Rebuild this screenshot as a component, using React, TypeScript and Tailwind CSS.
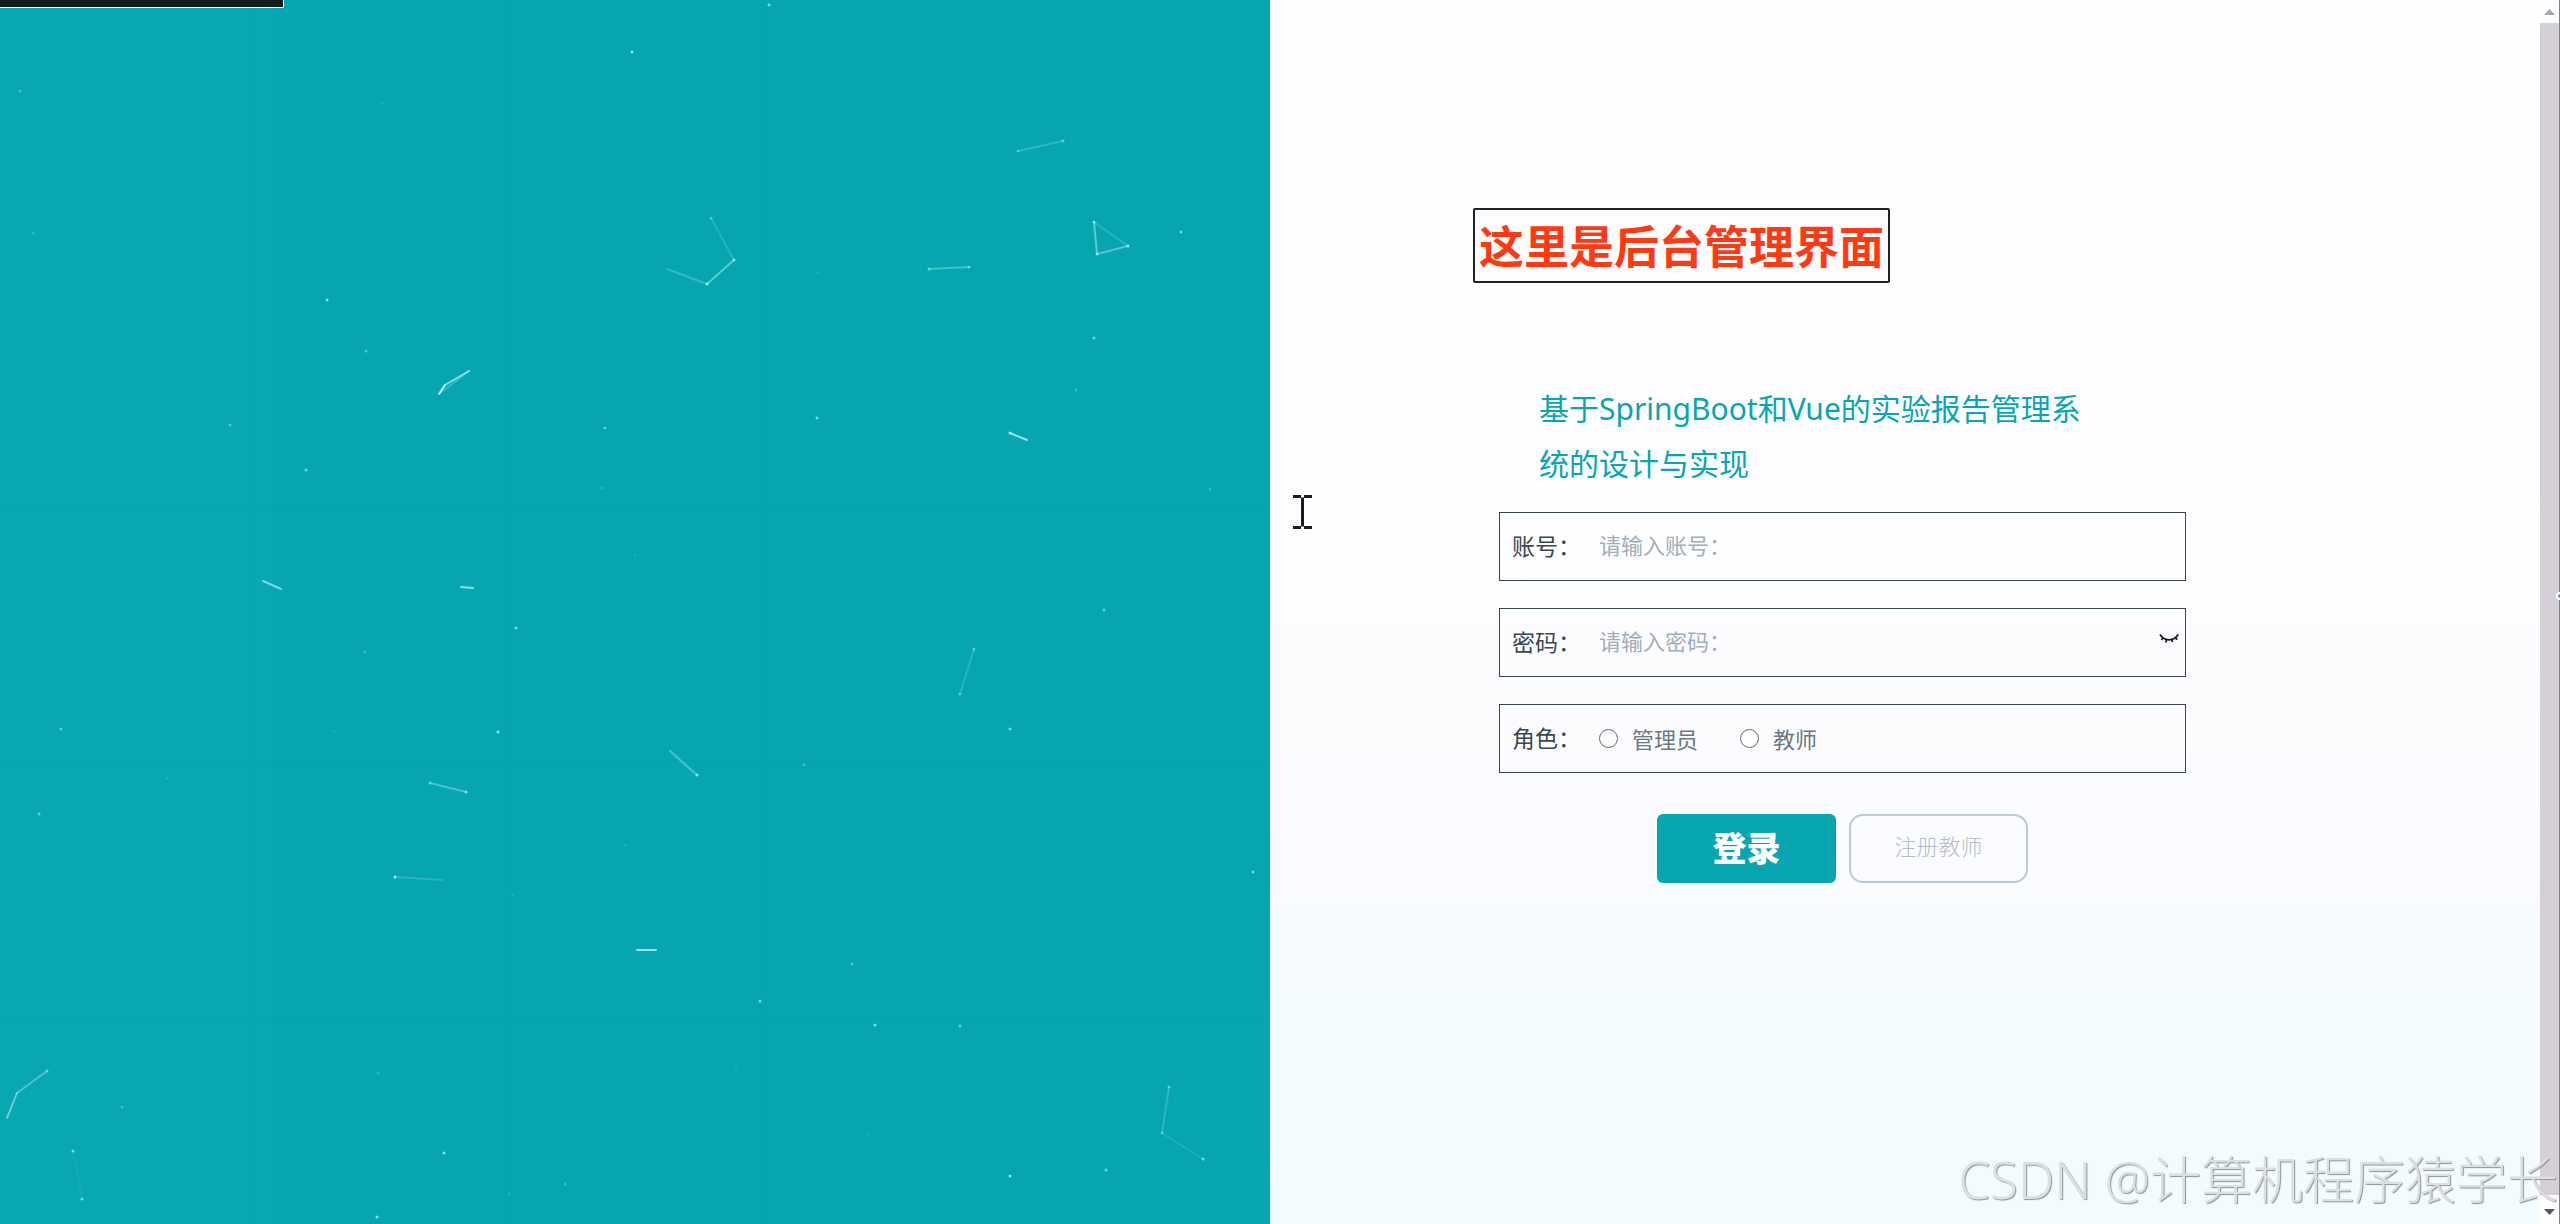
import React, { useState } from 'react';

type Line = [number, number, number, number, number];
type Dot = [number, number, number];

// x1, y1, x2, y2, opacity
const LINES: Line[] = [
  [439, 394, 445, 385, 0.95],
  [445, 385, 469, 371, 0.65],
  [439, 394, 469, 371, 0.25],
  [263, 581, 281, 589, 0.6],
  [461, 587, 473, 588, 0.7],
  [1018, 151, 1063, 141, 0.22],
  [711, 218, 734, 260, 0.16],
  [734, 260, 707, 284, 0.45],
  [707, 284, 667, 269, 0.25],
  [929, 269, 969, 267, 0.32],
  [1094, 222, 1097, 254, 0.45],
  [1097, 254, 1128, 246, 0.4],
  [1094, 222, 1128, 246, 0.2],
  [1010, 433, 1027, 440, 0.75],
  [430, 783, 466, 792, 0.35],
  [395, 877, 442, 880, 0.18],
  [7, 1118, 17, 1093, 0.5],
  [17, 1093, 47, 1071, 0.35],
  [73, 1151, 82, 1199, 0.06],
  [637, 950, 656, 950, 0.75],
  [974, 649, 960, 694, 0.18],
  [670, 751, 697, 775, 0.35],
  [1169, 1087, 1162, 1133, 0.2],
  [1162, 1133, 1203, 1159, 0.12],
];

// x, y, opacity
const DOTS: Dot[] = [
  [20, 91, 0.3], [33, 233, 0.25], [382, 103, 0.15], [632, 52, 0.75], [327, 300, 0.7],
  [366, 351, 0.4], [230, 425, 0.4], [306, 470, 0.6], [605, 428, 0.5], [602, 488, 0.2],
  [635, 555, 0.1], [769, 5, 0.6], [1181, 232, 0.6], [1094, 338, 0.6], [818, 273, 0.15],
  [817, 418, 0.6], [1076, 390, 0.25], [1210, 489, 0.25], [1104, 610, 0.5], [516, 628, 0.6],
  [365, 652, 0.3], [61, 729, 0.5], [334, 731, 0.12], [498, 732, 0.7], [167, 778, 0.15],
  [39, 814, 0.5], [625, 845, 0.15], [513, 895, 0.12], [378, 1073, 0.2], [122, 1107, 0.3],
  [444, 1153, 0.7], [565, 1184, 0.3], [509, 1194, 0.15], [377, 1217, 0.7], [1010, 729, 0.6],
  [804, 765, 0.3], [1253, 872, 0.6], [852, 964, 0.35], [760, 1001, 0.6], [875, 1025, 0.65],
  [960, 1026, 0.5], [736, 1066, 0.1], [867, 1135, 0.1], [1010, 1176, 0.7], [1106, 1170, 0.55],
  [1018, 151, 0.35], [1063, 141, 0.4], [711, 218, 0.3], [734, 260, 0.6], [707, 284, 0.7],
  [1094, 222, 0.5], [1097, 254, 0.5], [1128, 246, 0.6], [929, 269, 0.4], [969, 267, 0.4],
  [1010, 433, 0.7], [430, 783, 0.4], [466, 792, 0.6], [395, 877, 0.8], [73, 1151, 0.6],
  [82, 1199, 0.6], [47, 1071, 0.4], [974, 649, 0.4], [960, 694, 0.35], [697, 775, 0.7],
  [1169, 1087, 0.4], [1162, 1133, 0.3], [1203, 1159, 0.6],
];

function Particles() {
  return (
    <svg
      className="absolute inset-0 h-full w-full"
      viewBox="0 0 1270 1224"
      preserveAspectRatio="xMinYMin slice"
      aria-hidden="true"
    >
      {LINES.map(([x1, y1, x2, y2, o], i) => (
        <line key={i} x1={x1} y1={y1} x2={x2} y2={y2} stroke="#c8f8ff" strokeWidth="2" strokeOpacity={o} strokeLinecap="round" />
      ))}
      {DOTS.map(([x, y, o], i) => (
        <circle key={i} cx={x} cy={y} r="1.5" fill="#b8ffff" fillOpacity={o} />
      ))}
    </svg>
  );
}

function ClosedEye() {
  return (
    <svg className="h-3 w-5" viewBox="0 0 20 12" fill="none" stroke="#111c22" strokeWidth="1.7" aria-hidden="true">
      <path d="M1 1.500C3 4.800 6.200 6.800 10 6.800S17.200 4.800 19.200 1.500" />
      <path d="M4 4.600 2.400 7M7.600 6.500 6.900 9.600M12.500 6.500 13.700 9.200M16.200 4.600 18.200 6.700" />
    </svg>
  );
}

const FIELD = 'flex h-[69px] items-center border border-[#36464e] pl-3';
const LABEL = 'w-[87px] shrink-0 text-[23px] text-[#3a4750]';
const INPUT =
  'h-full min-w-0 flex-1 bg-transparent pb-1 text-[22px] text-[#323f48] outline-none placeholder:text-[#a0aeb9] placeholder:opacity-100';

function RoleOption({ value, role, onPick }: { value: string; role: string; onPick: (v: string) => void }) {
  return (
    <label className="flex items-center gap-[14px] text-[22px] leading-8 text-[#6b7880]">
      <input
        type="radio"
        name="role"
        value={value}
        checked={role === value}
        onChange={() => onPick(value)}
        className="h-[19px] w-[19px] appearance-none rounded-full border border-[#5f6d76] bg-white checked:border-[6px] checked:border-[#08a6b1]"
      />
      {value}
    </label>
  );
}

export default function App() {
  const [role, setRole] = useState('');
  const [visible, setVisible] = useState(false);

  return (
    <div className="relative grid min-h-screen grid-cols-[1fr_1fr_20px] overflow-hidden font-['Noto_Sans','Noto_Sans_CJK_SC',sans-serif]">
      <div className="relative bg-linear-to-r from-[#09a7b2] from-[272px] to-[#07a5b0] to-[272px]">
        <Particles />
        <div className="relative h-2 w-[284px] border-r border-b border-white bg-[#141c1c]" />
      </div>

      <main className="bg-[linear-gradient(to_bottom,#fefdff_40%,#fbfcff_72%,#f6fbff_75%,#f2fbfe_100%)] pt-[208px] pl-[203px]">
        <h1 className="w-fit rounded-xs border-2 border-[#1a2428] px-[4px] pt-[3px] text-[45px] leading-[68px] font-bold text-[#ff3a12]">
          这里是后台管理界面
        </h1>

        <form className="mt-[98px] ml-[26px] max-w-[687px]" onSubmit={(e) => e.preventDefault()}>
          <h2 className="ml-10 max-w-[570px] text-[30px] leading-[55px] text-[#08a6b1]">
            基于SpringBoot和Vue的实验报告管理系统的设计与实现
          </h2>

          <div className="mt-[21px] flex flex-col gap-[27px]">
            <div className={FIELD}>
              <label htmlFor="account" className={LABEL}>账号：</label>
              <input id="account" type="text" placeholder="请输入账号：" className={INPUT} />
            </div>
            <div className={FIELD}>
              <label htmlFor="password" className={LABEL}>密码：</label>
              <input id="password" type={visible ? 'text' : 'password'} placeholder="请输入密码：" className={INPUT} />
              <button type="button" aria-label="显示密码" onClick={() => setVisible(!visible)} className="mr-[6px] pb-2">
                <ClosedEye />
              </button>
            </div>
            <div className={FIELD} role="radiogroup" aria-labelledby="role-label">
              <span id="role-label" className={LABEL}>角色：</span>
              <div className="flex gap-[42px]">
                <RoleOption value="管理员" role={role} onPick={setRole} />
                <RoleOption value="教师" role={role} onPick={setRole} />
              </div>
            </div>
          </div>

          <div className="mt-[41px] flex justify-center gap-[13px]">
            <button type="submit" className="h-[69px] w-[179px] rounded-md bg-[#08a6b1] text-[34px] font-black text-white">
              登录
            </button>
            <button type="button" className="h-[69px] w-[179px] rounded-[14px] border-2 border-[#b9cad8] pb-1 text-[22px] font-light text-[#b4bdca]">
              注册教师
            </button>
          </div>
        </form>
      </main>

      <div className="flex flex-col items-center justify-between border-r border-[#4a90d0] bg-[#fefdff]" aria-hidden="true">
        <svg className="h-[23px] w-[11px]" viewBox="0 0 11 23"><path d="M0 15 5.500 9 11 15Z" fill="#aaa6ac" /></svg>
        <div className="w-full flex-1 bg-[#d5d0d8]" />
        <svg className="h-[29px] w-[11px]" viewBox="0 0 11 29"><path d="M0 14H11L5.500 20Z" fill="#55555c" /></svg>
      </div>

      <div className="absolute top-[592px] -right-1 h-2 w-2 rounded-full border-2 border-white bg-[#4a90d0]" />

      <svg className="absolute top-[494px] left-[1292px] h-9 w-5" viewBox="0 0 20 36" fill="none" stroke="#151d20" strokeWidth="3" aria-hidden="true">
        <path d="M1 2.500H9M12 2.500H20M10.500 3.500V32.500M1 33.500H9M12 33.500H20" />
      </svg>

      <p className="pointer-events-none absolute right-[2px] bottom-[12px] text-[51px] leading-[66px] font-light whitespace-nowrap text-[#dddfe0] [text-shadow:1px_1px_1px_#8f9496]">
        CSDN @计算机程序猿学长
      </p>
    </div>
  );
}
